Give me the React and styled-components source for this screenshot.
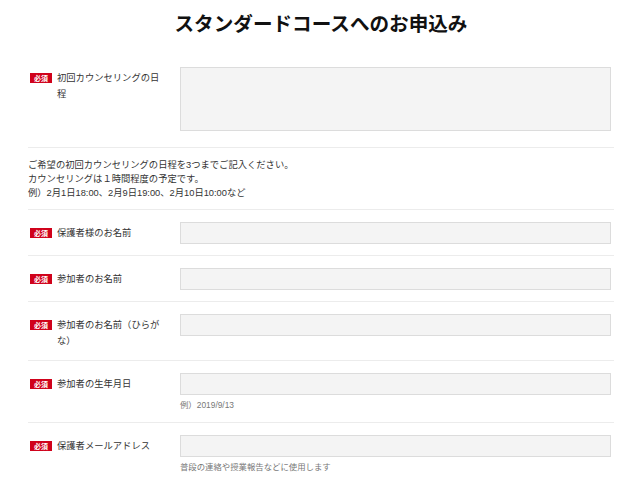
import styled, { createGlobalStyle } from "styled-components";

const GlobalStyle = createGlobalStyle`
  body {
    margin: 0;
    background: #fff;
    font-family: "Liberation Sans", "Noto Sans CJK JP", sans-serif;
    color: #333;
  }
`;

const Page = styled.div`
  padding: 0 26px 0 28px;
`;

const Title = styled.h1`
  margin: 0;
  padding: 9px 0 0;
  height: 46px;
  text-align: center;
  font-family: "Noto Sans CJK JP", sans-serif;
  font-size: 19.6px;
  font-weight: 700;
  line-height: 28px;
  color: #111;
`;

const Row = styled.div`
  display: grid;
  grid-template-columns: 152px 1fr;
  padding: 12px 0 ${({ bottom }) => bottom || 11}px;
  border-top: ${({ first }) => (first ? "none" : "1px solid #ececec")};
`;

const Label = styled.div`
  display: flex;
  align-items: flex-start;
  padding-top: 3px;
  font-size: 9.3px;
  line-height: 16px;
`;

const Badge = styled.span`
  flex: none;
  margin: 3px 5px 0 2px;
  width: 22px;
  height: 10px;
  background: #d0021b;
  color: #fff;
  font-family: "Noto Sans CJK JP", sans-serif;
  font-size: 7px;
  font-weight: 700;
  line-height: 10px;
  text-align: center;
`;

const LabelText = styled.span`
  width: 106px;
`;

const Field = styled.div`
  padding-right: 3px;
`;

const Input = styled.div`
  box-sizing: border-box;
  height: ${({ tall }) => (tall ? 64 : 22)}px;
  background: #f4f4f4;
  border: 1px solid #dcdcdc;
`;

const Hint = styled.div`
  margin-top: 3px;
  font-size: 8.4px;
  line-height: 14px;
  color: #777;
`;

const Note = styled.div`
  padding: 10px 0 9px;
  border-top: 1px solid #ececec;
  font-size: 9.3px;
  line-height: 14px;
`;

const fields = [
  { label: "保護者様のお名前" },
  { label: "参加者のお名前" },
  { label: "参加者のお名前（ひらがな）", bottom: 11 },
  { label: "参加者の生年月日", hint: "例）2019/9/13", bottom: 10 },
  { label: "保護者メールアドレス", hint: "普段の連絡や授業報告などに使用します", bottom: 10 },
];

const App = () => (
  <Page>
    <GlobalStyle />
    <Title>スタンダードコースへのお申込み</Title>
    <Row first bottom={16}>
      <Label>
        <Badge>必須</Badge>
        <LabelText>初回カウンセリングの日程</LabelText>
      </Label>
      <Field>
        <Input tall />
      </Field>
    </Row>
    <Note>
      ご希望の初回カウンセリングの日程を3つまでご記入ください。
      <br />
      カウンセリングは１時間程度の予定です。
      <br />
      例）2月1日18:00、2月9日19:00、2月10日10:00など
    </Note>
    {fields.map((f) => (
      <Row key={f.label} bottom={f.bottom}>
        <Label>
          <Badge>必須</Badge>
          <LabelText>{f.label}</LabelText>
        </Label>
        <Field>
          <Input />
          {f.hint && <Hint>{f.hint}</Hint>}
        </Field>
      </Row>
    ))}
  </Page>
);

export default App;
